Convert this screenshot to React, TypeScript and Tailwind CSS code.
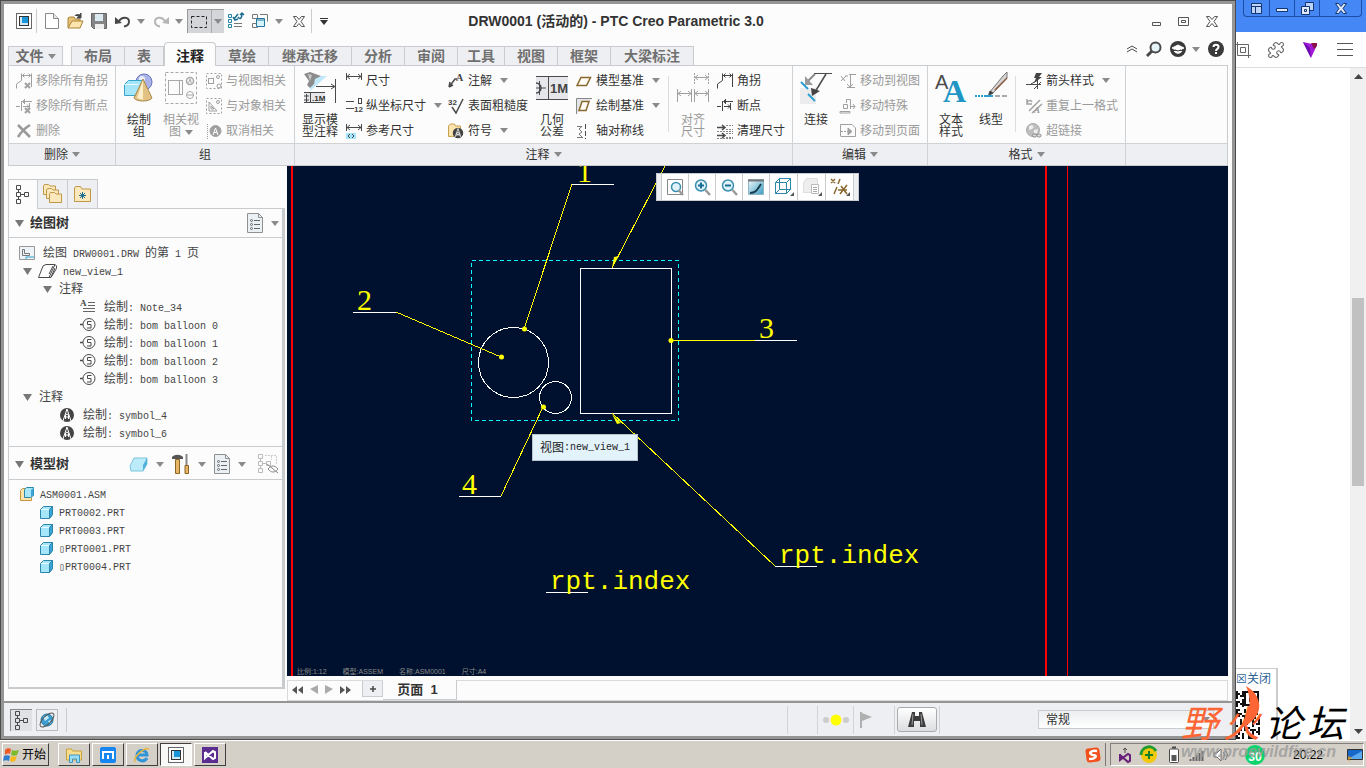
import type { ReactNode } from "react";
import { clsx } from "clsx";
import { Puzzle } from "lucide-react";

type Kids = { children?: ReactNode };

const Svg = ({ w = 16, h = 16, children }: Kids & { w?: number; h?: number }) => (
  <svg width={w} height={h} viewBox={`0 0 ${w} ${h}`} fill="none" stroke="#4a4a4a" className="shrink-0 overflow-visible" aria-hidden="true">
    {children}
  </svg>
);

const Caret = ({ dark = false }: { dark?: boolean }) => (
  <svg width="8" height="5" className="shrink-0" aria-hidden="true">
    <path d="M0 0h8L4 5z" fill={dark ? "#333" : "#8a8a8a"} />
  </svg>
);

// Latin runs sit next to 12px Chinese text with 6px wide cells
const Mono = ({ children }: Kids) => (
  <span className="font-['Liberation_Mono','Noto_Sans_CJK_SC',monospace] text-[10px] whitespace-pre">{children}</span>
);

/* ---------- icons ---------- */

const CornerIcon = ({ off = false }: { off?: boolean }) => (
  <Svg>
    <g stroke={off ? "#a0a0a0" : "#444"}>
      <path d="M.5 15.500V11L5.500 7.500V.5M15.500 .5V14M6 2.500H15" />
      <path d="M8.500.5L6.500 2.500L8.500 4.500M12.500.5L14.500 2.500L12.500 4.500" />
      {off && <path d="M9 10l5 5M14 10l-5 5" strokeWidth="2" />}
    </g>
  </Svg>
);

const BreakIcon = ({ off = false }: { off?: boolean }) => (
  <Svg>
    <g stroke={off ? "#a0a0a0" : "#444"}>
      <path d="M0 8.500H4M5.500 3V13M8.500 1V6M7 3.500H16M7 8.500H13M13.500 5V12" />
      <path d="M9 1L6.500 3.500L9 6M11 6.500l2 2-2 2" />
      {off && <path d="M9 10l5 5M14 10l-5 5" strokeWidth="2" />}
    </g>
  </Svg>
);

const DeleteIcon = () => (
  <Svg>
    <path d="M2 2l12 12M14 2C9 5 5 9 2 14" stroke="#999" strokeWidth="2.500" />
  </Svg>
);

const ShapesIcon = () => (
  <Svg w={32} h={32}>
    <circle cx="21" cy="10" r="8" fill="#aab4ea" stroke="#6674b8" />
    <circle cx="19" cy="7" r="3" fill="#e9ecfd" stroke="none" />
    <path d="M1.500 12.500l4-4h14v11l-3 4h-15z" fill="#a5e6fb" stroke="#38a5cb" />
    <path d="M1.500 12.500h14" stroke="#e8faff" />
    <path d="M20 7l-9 19c2 4 16 4 18 0z" fill="#e3c283" stroke="#a88a4a" />
    <path d="M20 8l-6 18 6 2z" fill="#fbeecb" stroke="none" />
  </Svg>
);

const RelatedViewIcon = () => (
  <Svg w={32} h={32}>
    <g stroke="#a8a8a8">
      <rect x=".5" y=".5" width="31" height="31" strokeDasharray="3 2" />
      <rect x="3.500" y="8.500" width="14" height="14" />
      <path d="M14.500 9v13" />
      <circle cx="25" cy="9" r="3.500" strokeWidth="1.500" />
      <circle cx="25" cy="23" r="3.500" />
      <path d="M21 23h8M23.500 11l1.500-4 1.500 4" />
    </g>
  </Svg>
);

const RelateIcon = ({ kind }: { kind: "view" | "object" | "cancel" }) => (
  <Svg>
    <g stroke="#a0a0a0">
      {kind === "cancel" ? (
        <>
          <path d="M1.500 1v15" strokeDasharray="1 1" />
          <circle cx="9.500" cy="8" r="5.500" fill="#a0a0a0" />
          <path d="M7 12l2.500-7 2.500 7M8 9.500h3" stroke="#fff" />
        </>
      ) : (
        <>
          <rect x=".5" y=".5" width="15" height="15" strokeDasharray="2 2" />
          {kind === "view" ? <rect x="2.500" y="5.500" width="5" height="5" /> : <path d="M3 13V4l8 9zM5 11V8l3 3z" />}
          <circle cx="12" cy="4" r="1.500" />
          {kind === "view" && <circle cx="13" cy="13" r="2" />}
        </>
      )}
    </g>
  </Svg>
);

const ShowNotesIcon = () => (
  <Svg w={32} h={32}>
    <path d="M7 10L14 4h9L6 19z" fill="#bfe9fa" stroke="none" />
    <path d="M0 2l6-2 11 4-6 3-1 5-4 4-3-3 2-4z" fill="#8b8b8b" stroke="none" />
    <path d="M4 2l4 1-2 6z" fill="#c9c9c9" stroke="none" />
    <path d="M12 14.500H30M31.500 7v24M27 12l4 2.500-4 2.500" />
    <rect x="0" y="20" width="21" height="11" fill="#e6e7ea" stroke="none" />
    <path d="M0 20.500h21M0 30.500h21M6.500 20v11M2.500 22v8M0 24h5M0 28h5" />
    <text x="8" y="29" fontSize="8" fontWeight="bold" fontFamily="Liberation Sans, sans-serif" fill="#333" stroke="none">.1M</text>
  </Svg>
);

const DimIcon = ({ reference = false }: { reference?: boolean }) => (
  <Svg>
    <g transform={reference ? undefined : "translate(0 -1)"}>
      <path d="M.5 1v7M15.500 1v7M1 4.500h14M4 2L1 4.500 4 7M12 2l3 2.500L12 7" />
      {reference && <rect x="0" y="10" width="10" height="6" fill="#a5e6fb" stroke="none" />}
      {reference && <path d="M4 11L2 13l2 2M6 11l2 2-2 2" />}
    </g>
  </Svg>
);

const OrdinateIcon = () => (
  <Svg>
    <path d="M0 3.500h8M0 10.500h8" />
    <rect x="12.500" y=".5" width="3" height="5" />
    <text x="8" y="14" fontSize="8" fontWeight="bold" fontFamily="Liberation Sans, sans-serif" fill="#444" stroke="none">12</text>
  </Svg>
);

const NoteIcon = () => (
  <Svg>
    <path d="M1 14L7 6H9M1 14l1-5M1 14l4-2" strokeWidth="1.500" />
    <text x="8" y="8" fontSize="10" fontWeight="bold" fontFamily="Liberation Serif, serif" fill="#444" stroke="none">A</text>
  </Svg>
);

const RoughIcon = () => (
  <Svg>
    <text x="0" y="7" fontSize="8" fontWeight="bold" fontFamily="Liberation Sans, sans-serif" fill="#444" stroke="none">32</text>
    <path d="M4 9l4 6L15 1" strokeWidth="1.500" />
  </Svg>
);

const SymbolMark = ({ folder = false }: { folder?: boolean }) => (
  <Svg>
    {folder && <path d="M.5 13.500V3l2-2h4l1 2h5v10z" fill="#fbe4ae" stroke="#c6a04e" />}
    <g transform={folder ? "translate(4 4) scale(.75)" : undefined}>
      <circle cx="8" cy="8" r="7" fill="#444" stroke="none" />
      <path d="M4 14L8 2l4 12" fill="#444" stroke="#fff" />
      <path d="M6.500 12V8l1.500-1 1.500 1v4M6.500 10h3" stroke="#fff" />
    </g>
  </Svg>
);

const GeomTolIcon = () => (
  <Svg w={32} h={32}>
    <rect x="0" y="5" width="32" height="22" fill="#e6e7ea" stroke="none" />
    <path d="M0 4.500h32M0 27.500h32M12.500 5v22M3.500 9v14M0 16h10" />
    <path d="M0 11a5 5 0 0 1 0 10" strokeWidth="1.500" />
    <text x="14" y="21" fontSize="13" fontWeight="bold" fontFamily="Liberation Sans, sans-serif" fill="#444" stroke="none">1M</text>
  </Svg>
);

const DatumIcon = ({ active = false }: { active?: boolean }) => (
  <Svg>
    {active && <path d="M.5 16V.5H16" fill="#e3e4e6" stroke="#888" />}
    <path d={active ? "M3 12.500L6 3.500h7l-3 9z" : "M1 12.500L5 4.500h9.500l-4 8z"} stroke="#89672e" strokeWidth="1.500" fill="#fffdf5" />
  </Svg>
);

const AxisSymIcon = () => (
  <Svg>
    <path d="M1 3.500h5M6 3.500L3 6l3 3-3 2 3 3M1 14.500h6" stroke="#777" />
    <path d="M9.500 1v15" strokeDasharray="5 2" />
  </Svg>
);

const AlignDimIcon = () => (
  <Svg w={32} h={32}>
    <g stroke="#a0a0a0">
      <path d="M.5 17v13M14.500 17v13M17.500 17v13M31.500 17v13M1 21.500h13M18 21.500h13" />
      <path d="M4 19l-3 2.500L4 24M11 19l3 2.500-3 2.500M21 19l-3 2.500 3 2.500M28 19l3 2.500-3 2.500" />
      <path d="M17.500 1v12M31.500 1v12" strokeDasharray="2 1" />
      <path d="M18 5.500h13M21 3l-3 2.500L21 8M28 3l3 2.500L28 8" />
    </g>
  </Svg>
);

const CleanIcon = () => (
  <Svg>
    <path d="M0 4.500h8M0 12.500h8M5 2l3 2.500L5 7M5 10l3 2.500L5 15" strokeWidth="1.500" />
    <path d="M9 2.500h7M9 6.500h7M9 10.500h7M9 14.500h7M0 8.500h16M0 15.500h16" stroke="#888" strokeDasharray="2 1" />
  </Svg>
);

const ConnectIcon = () => (
  <Svg w={32} h={32}>
    <rect x="0" y="16" width="16" height="16" fill="#ececee" stroke="none" />
    <path d="M14 1.500H32" />
    <path d="M26 2L15 20" strokeWidth="1.500" />
    <path d="M15 2L7 10" stroke="#8c8c8c" strokeWidth="2" />
    <path d="M5 4v9h8z" fill="#999" stroke="none" />
    <path d="M11 16l9 3-8 5z" fill="#444" stroke="none" />
    <path d="M1 10l7 7M8 22l7 7" stroke="#2a9fd0" strokeWidth="2" />
  </Svg>
);

const MoveIcon = ({ kind }: { kind: "view" | "special" | "page" }) => (
  <Svg>
    <g stroke="#a0a0a0">
      {kind === "view" && <path d="M9 1.500h7M10.500 2v11M7 14.500h8M1 3l4 5M1 8l5-5M5 3l3 0M7 11l3 3 3-3" />}
      {kind === "special" && <path d="M6.500 5V1.500h4V11M3.500 6.500h4v4h-4zM0 13.500h10V15H0zM11 8.500h4M13 6l2 2.500-2 2.500" />}
      {kind === "page" && (
        <>
          <path d="M.5 13V1.500H12L15.500 5v8.500H.5" />
          <path d="M1 8.500h8" strokeDasharray="2 1" />
          <path d="M8 5l4 3.500L8 12z" fill="#a0a0a0" />
        </>
      )}
    </g>
  </Svg>
);

const TextStyleIcon = () => (
  <Svg w={32} h={32}>
    <g stroke="none">
      <text x="0" y="17" fontSize="20" fontFamily="Liberation Sans, sans-serif" fill="#4b4b4b">A</text>
      <text x="8" y="30" fontSize="32" fontWeight="bold" fontFamily="Liberation Serif, serif" fill="#2196c4">A</text>
    </g>
  </Svg>
);

const LineTypeIcon = () => (
  <Svg w={32} h={32}>
    <path d="M14 21L28 4l4-4v6L18 21l-4 2z" fill="#d4d4d4" stroke="#777" />
    <path d="M20 18L32 6" stroke="#8c5a3c" strokeWidth="1.500" />
    <path d="M14 23l1-4 3 2z" fill="#333" />
    <path d="M0 24h8" stroke="#2a9fd0" strokeDasharray="2 1" strokeWidth="2" />
    <path d="M9 24h9" stroke="#2a9fd0" strokeWidth="2" />
    <path d="M20 24h12" stroke="#aaa" strokeDasharray="5 2" strokeWidth="2" />
  </Svg>
);

const ArrowStyleIcon = () => (
  <Svg>
    <path d="M0 11.500h15M11.500 6v10M5 11l7-4M15 9l-7 7" />
    <path d="M10 0h6l-3 4h3l-8 6 2-5H8z" fill="#444" stroke="none" />
  </Svg>
);

const RepeatIcon = () => (
  <Svg>
    <path d="M3 13L14 2M6 15L16 6M1 1v5h5M1 5c1-3 4-3 5-1" stroke="#a0a0a0" strokeWidth="1.500" />
    <text x="8" y="15" fontSize="9" fontStyle="italic" fontWeight="bold" fontFamily="Liberation Serif, serif" fill="#999" stroke="none">A</text>
  </Svg>
);

const GlobeLinkIcon = () => (
  <Svg>
    <circle cx="7" cy="7" r="6.500" fill="#bdbdbd" stroke="#aaa" />
    <path d="M3 3l3-1 2 2-2 2-3 1zM8 7l4-1-1 4-3 1z" fill="#eee" stroke="none" />
    <rect x="6.500" y="11" width="4" height="3" rx="1.500" fill="#ddd" stroke="#888" />
    <rect x="11" y="11" width="4" height="3" rx="1.500" fill="#ddd" stroke="#888" />
  </Svg>
);

const TreeIcon = () => (
  <Svg w={14} h={19}>
    <path d="M.5.5h4v4h-4zM.5 7.500h4v4h-4zM.5 14.500h4v4h-4zM8.500 7.500h4v4h-4zM2.500 5v2M2.500 12v2M5 9.500h3" />
  </Svg>
);

const Folder = ({ x = 0, y = 0 }: { x?: number; y?: number }) => (
  <g transform={`translate(${x} ${y})`}>
    <path d="M.5 10.500V2l1-1.500h4L7 2h5.500v8.500z" fill="#fbe8bd" stroke="#bf9848" />
  </g>
);

const ListDocIcon = () => (
  <Svg w={16} h={20}>
    <path d="M.5.5h11l4 4v15H.5z" fill="#eaf1f4" stroke="#909090" />
    <path d="M11.500.5v4h4" stroke="#909090" />
    <path d="M7 7.500h6M7 11.500h6M7 15.500h6" stroke="#666" />
    <circle cx="4.500" cy="7.500" r="1" stroke="#666" />
    <circle cx="4.500" cy="11.500" r="1" stroke="#666" />
    <circle cx="4.500" cy="15.500" r="1" stroke="#666" />
  </Svg>
);

const PartIcon = () => (
  <Svg w={13} h={13}>
    <path d="M.5 3.500l3-3h9v8l-3 4h-9z" fill="#a5e6fb" stroke="#2c86ab" />
    <path d="M9.500 3.500l3-3v8l-3 4z" fill="#3aa5d6" stroke="#2c86ab" />
    <path d="M1 3.500h8" stroke="#e8faff" />
  </Svg>
);

const AsmIcon = () => (
  <Svg w={14} h={15}>
    <path d="M.5 3.500l2-2h3v9h6v3H.5z" fill="#fbe4ae" stroke="#c6943c" />
    <path d="M4.500 2.500l2-2h7v8l-3 2h-6z" fill="#a5e6fb" stroke="#2c86ab" />
    <path d="M11 3l2.500-2v7L11 10z" fill="#3aa5d6" stroke="none" />
  </Svg>
);

const BalloonIcon = () => (
  <Svg>
    <path d="M0 7.500h3" strokeWidth="1.500" />
    <circle cx="9" cy="7.500" r="6" />
    <path d="M11.500 4.500h-4v3h3.500v3.500h-4" />
  </Svg>
);

const AppIcon = () => (
  <Svg>
    <rect x=".5" y=".5" width="15" height="15" fill="#fff" stroke="#666" />
    <rect x="3.500" y="3.500" width="9" height="9" stroke="#333" fill="#cfe9f7" />
    <rect x="6" y="4" width="6" height="6" fill="#1a95da" stroke="none" />
  </Svg>
);

const UndoIcon = ({ redo = false }: { redo?: boolean }) => (
  <Svg>
    <g transform={redo ? "translate(16 0) scale(-1 1)" : undefined} stroke={redo ? "#b5b5b5" : "#484848"}>
      <path d="M4 8C7 3 14 4 14 8.500c0 3-2 4.500-5 5" strokeWidth="2" />
      <path d="M0 4v7l7-1z" fill={redo ? "#b5b5b5" : "#484848"} stroke="none" />
    </g>
  </Svg>
);

const CloseX = () => (
  <Svg w={12} h={11}>
    <path d="M.5.5h3L6 3.500 8.500.5h3L8 5.500l3.500 5h-3L6 7.500l-2.500 3h-3L4 5.500z" stroke="#555" />
  </Svg>
);

/* ---------- ribbon ---------- */

function Small({ icon, text, off, drop }: { icon: ReactNode; text: string; off?: boolean; drop?: boolean }) {
  return (
    <button disabled={off} className={clsx("flex h-[25px] items-center gap-1 text-left whitespace-nowrap", off ? "text-[#9a9a9a]" : "text-[#333]")}>
      {icon}
      <span>{text}</span>
      {drop && <span className="ml-1"><Caret /></span>}
    </button>
  );
}

function Big({ icon, lines, off, drop }: { icon: ReactNode; lines: string[]; off?: boolean; drop?: boolean }) {
  return (
    <button disabled={off} className={clsx("flex w-10 shrink-0 flex-col items-center pt-1", off ? "text-[#9a9a9a]" : "text-[#333]")}>
      {icon}
      <span className="mt-[10px] flex flex-col items-center leading-[12px] whitespace-nowrap">
        {lines.map((line, i) => (
          <span key={line} className="flex items-center gap-1">
            {line}
            {drop && i === lines.length - 1 && <Caret />}
          </span>
        ))}
      </span>
    </button>
  );
}

function Group({ title, drop, className, children }: Kids & { title?: string; drop?: boolean; className: string }) {
  return (
    <section className={clsx("flex flex-col border-r border-[#cfd2d5] last:border-r-0", className)}>
      <div className="flex h-[77px] items-start pt-[2px]">{children}</div>
      <div className="flex h-[22px] items-center justify-center gap-1 border-t border-[#cfd2d5] bg-[#eeeff2] text-[#333]">
        {title}
        {drop && <Caret />}
      </div>
    </section>
  );
}

const Sep = () => <span className="mt-2 h-14 w-px bg-[#dcdcdc]" />;

function Ribbon() {
  return (
    <div className="mx-1 flex h-[101px] shrink-0 border border-[#c8cccf] text-[12px]">
      <Group title="删除" drop className="w-[107px]">
        <div className="pl-[7px]">
          <Small off icon={<CornerIcon off />} text="移除所有角拐" />
          <Small off icon={<BreakIcon off />} text="移除所有断点" />
          <Small off icon={<DeleteIcon />} text="删除" />
        </div>
      </Group>
      <Group title="组" className="w-[179px]">
        <div className="flex pl-[3px]">
          <Big icon={<ShapesIcon />} lines={["绘制", "组"]} />
          <span className="w-[2px]" />
          <Big off drop icon={<RelatedViewIcon />} lines={["相关视", "图"]} />
          <div className="ml-[5px]">
            <Small off icon={<RelateIcon kind="view" />} text="与视图相关" />
            <Small off icon={<RelateIcon kind="object" />} text="与对象相关" />
            <Small off icon={<RelateIcon kind="cancel" />} text="取消相关" />
          </div>
        </div>
      </Group>
      <Group title="注释" drop className="w-[498px]">
        <div className="ml-[5px] flex">
          <Big icon={<ShowNotesIcon />} lines={["显示模", "型注释"]} />
          <div className="ml-[6px]">
            <Small icon={<DimIcon />} text="尺寸" />
            <Small drop icon={<OrdinateIcon />} text="纵坐标尺寸" />
            <Small icon={<DimIcon reference />} text="参考尺寸" />
          </div>
          <div className="ml-[6px]">
            <Small drop icon={<NoteIcon />} text="注解" />
            <Small icon={<RoughIcon />} text="表面粗糙度" />
            <Small drop icon={<SymbolMark folder />} text="符号" />
          </div>
          <span className="w-1" />
          <Big icon={<GeomTolIcon />} lines={["几何", "公差"]} />
          <div className="ml-1">
            <Small drop icon={<DatumIcon />} text="模型基准" />
            <Small drop icon={<DatumIcon active />} text="绘制基准" />
            <Small icon={<AxisSymIcon />} text="轴对称线" />
          </div>
          <span className="w-2" />
          <Sep />
          <span className="w-1" />
          <Big off icon={<AlignDimIcon />} lines={["对齐", "尺寸"]} />
          <div className="ml-1">
            <Small icon={<CornerIcon />} text="角拐" />
            <Small icon={<BreakIcon />} text="断点" />
            <Small icon={<CleanIcon />} text="清理尺寸" />
          </div>
        </div>
      </Group>
      <Group title="编辑" drop className="w-[135px]">
        <div className="ml-[3px] flex">
          <Big icon={<ConnectIcon />} lines={["连接"]} />
          <div className="ml-1">
            <Small off icon={<MoveIcon kind="view" />} text="移动到视图" />
            <Small off icon={<MoveIcon kind="special" />} text="移动特殊" />
            <Small off icon={<MoveIcon kind="page" />} text="移动到页面" />
          </div>
        </div>
      </Group>
      <Group title="格式" drop className="w-[198px]">
        <div className="ml-[3px] flex">
          <Big icon={<TextStyleIcon />} lines={["文本", "样式"]} />
          <Big icon={<LineTypeIcon />} lines={["线型"]} />
          <span className="w-1" />
          <Sep />
          <div className="ml-[10px]">
            <Small drop icon={<ArrowStyleIcon />} text="箭头样式" />
            <Small off icon={<RepeatIcon />} text="重复上一格式" />
            <Small off icon={<GlobeLinkIcon />} text="超链接" />
          </div>
        </div>
      </Group>
      <Group className="flex-1" />
    </div>
  );
}

/* ---------- title bar and tabs ---------- */

function TitleBar() {
  return (
    <div className="flex h-[34px] shrink-0 items-center px-3">
      <div className="flex flex-1 items-center">
        <AppIcon />
        <span className="mr-2 ml-1 h-6 w-px bg-[#ccc]" />
        <button aria-label="新建">
          <Svg w={14}>
            <path d="M.5.5h8l5 5v10H.5z" fill="#fff" stroke="#888" />
            <path d="M8.500.5v5h5" stroke="#888" fill="#dfe9ee" />
          </Svg>
        </button>
        <button aria-label="打开" className="ml-2">
          <Svg>
            <path d="M1 14.500V5l2-1h4l1 2h5v3" fill="#e6c47a" stroke="#ab8237" />
            <path d="M1 15l4-7h11l-3 7z" fill="#fbe4ae" stroke="#ab8237" />
            <path d="M8 3c1-2 4-2 5 0M14 0v5h-4z" fill="#444" />
          </Svg>
        </button>
        <button aria-label="保存" className="ml-2">
          <Svg>
            <path d="M.5.5h15v15H2.500l-2-2z" fill="#858585" stroke="#666" />
            <rect x="4" y="1" width="8" height="7" fill="#dcebf2" stroke="none" />
            <rect x="4" y="11" width="9" height="5" fill="#eee" stroke="none" />
          </Svg>
        </button>
        <button aria-label="撤消" className="ml-2 flex items-center gap-[6px]"><UndoIcon /><Caret /></button>
        <button aria-label="重做" className="ml-2 flex items-center gap-[6px]"><UndoIcon redo /><Caret /></button>
        <button aria-label="选择" className="ml-1 flex h-6 items-center border-t border-l border-[#999] bg-[#d3d5d8] pl-[3px]">
          <Svg w={17} h={12}>
            <rect x=".5" y=".5" width="15" height="11" stroke="#222" strokeDasharray="3 2" />
          </Svg>
          <span className="ml-[3px] flex h-full items-center border-l border-[#aaa] px-[2px]"><Caret /></span>
        </button>
        <button aria-label="重新生成" className="ml-1">
          <Svg>
            <path d="M.5 1.500h3v3h-3zM.5 6.500h3v3h-3zM.5 11.500h3v3h-3z" stroke="#2385ac" />
            <path d="M6 10.500h8M6 13.500h8" stroke="#777" />
            <path d="M6 6l4-5M5 4l2 3 3-1M10 4c2 3 4 1 4-3M12 2l2-2 2 2" stroke="#1b6d92" strokeWidth="1.500" />
          </Svg>
        </button>
        <button aria-label="窗口" className="ml-2 flex items-center gap-[7px]">
          <Svg>
            <path d="M.5 1.500h5v4h-5zM.5 10.500h5v4h-5zM8 1.500h7.500v7" stroke="#777" />
            <path d="M4.500 5.500h8v8h-8z" fill="#d6f2fb" stroke="#26799c" />
            <path d="M5 7h8" stroke="#26799c" />
          </Svg>
          <Caret />
        </button>
        <button aria-label="关闭" className="ml-[10px]"><CloseX /></button>
        <span className="ml-[6px] h-6 w-px bg-[#ccc]" />
        <button aria-label="自定义" className="ml-2 flex flex-col gap-px">
          <span className="h-px w-2 bg-[#333]" />
          <Caret dark />
        </button>
      </div>
      <h1 className="text-[14px] font-bold text-[#333]">DRW0001 (活动的) - PTC Creo Parametric 3.0</h1>
      <div className="-mr-[2px] ml-[2px] flex flex-1 items-center justify-end gap-4 pr-1">
        <button aria-label="最小化"><Svg w={10} h={9}><path d="M.5 5.500h8v3h-8z" stroke="#555" /></Svg></button>
        <button aria-label="最大化"><Svg w={12} h={9}><path d="M.5.5h10v8h-10zM3.500 3.500h4v2h-4z" stroke="#555" /></Svg></button>
        <button aria-label="关闭窗口"><CloseX /></button>
      </div>
    </div>
  );
}

const tabs = ["布局", "表", "注释", "草绘", "继承迁移", "分析", "审阅", "工具", "视图", "框架", "大梁标注"];

function TabRow() {
  return (
    <div className="-mb-px flex h-7 shrink-0 items-end px-1 text-[14px] font-bold">
      <button className="mr-2 flex h-5 w-[55px] items-center justify-center gap-1 border border-b-0 border-[#c8cccf] bg-[#eeeff2] text-[#6b6b6b]">
        文件 <Caret />
      </button>
      <nav className="flex items-end" role="tablist">
        {tabs.map((tab, i) => (
          <button
            key={tab}
            role="tab"
            aria-selected={tab === "注释"}
            className={clsx(
              "border-[#c8cccf] whitespace-nowrap",
              tab === "工具" ? "px-[9px]" : tab.length === 4 ? "px-[13px]" : tab === "注释" ? "px-[11px]" : "px-3",
              tab === "注释"
                ? "z-10 h-6 rounded-t-sm border border-b-0 bg-[#fcfcfc] pt-[2px] leading-[20px] text-[#222]"
                : "h-5 border-t border-r bg-[#eeeff2] leading-[19px] text-[#707070]",
              i === 0 && "border-l",
            )}
          >
            {tab}
          </button>
        ))}
      </nav>
      <div className="ml-auto flex h-7 items-center pt-1 pr-1 pb-[10px]">
        <button aria-label="折叠功能区" className="mr-2">
          <Svg w={12} h={8}><path d="M1 4l5-3 5 3M1 7l5-3 5 3" /></Svg>
        </button>
        <button aria-label="搜索" className="mr-2">
          <Svg>
            <circle cx="9.500" cy="6.500" r="5" strokeWidth="2" fill="#e6f4fa" />
            <path d="M6 10l-5 5" strokeWidth="3" />
          </Svg>
        </button>
        <button aria-label="学习" className="mr-2 flex items-center gap-[6px]">
          <Svg>
            <circle cx="8" cy="8" r="8" fill="#3a3a3a" stroke="none" />
            <path d="M2 7l6-3 6 3-6 3zM4 10c2 3 6 3 8 0" stroke="#fff" fill="#fff" />
            <path d="M5 9l3 1 3-1" stroke="#3a3a3a" />
          </Svg>
          <Caret />
        </button>
        <button aria-label="帮助">
          <Svg>
            <circle cx="8" cy="8" r="8" fill="#3a3a3a" stroke="none" />
            <path d="M5.500 6c0-3 5-3 5 0 0 2-2.500 2-2.500 4M8 11v2" stroke="#fff" strokeWidth="2" />
          </Svg>
        </button>
      </div>
    </div>
  );
}

/* ---------- left panel ---------- */

const Twist = () => (
  <svg width="9" height="7" className="shrink-0" aria-hidden="true">
    <path d="M0 0h9L4.500 7z" fill="#777" />
  </svg>
);

function Row({ icon, pad, twist, children }: Kids & { icon?: ReactNode; pad: string; twist?: boolean }) {
  return (
    <li className={clsx("flex h-[18px] items-center whitespace-nowrap", pad)}>
      {twist && <span className="mr-[7px]"><Twist /></span>}
      {icon && <span className="mr-2 flex shrink-0">{icon}</span>}
      <span>{children}</span>
    </li>
  );
}

function TreePanel() {
  return (
    <aside className="flex w-[283px] shrink-0 flex-col pt-[13px] pr-[2px] pb-3 pl-1 text-[12px] text-[#444]">
      <div className="-mb-px flex h-[30px]">
        <button aria-label="模型树" className="z-10 flex w-[30px] items-center justify-center border border-b-0 border-[#c8cccf] bg-[#fcfcfc]"><TreeIcon /></button>
        <button aria-label="文件夹" className="flex w-[30px] items-center justify-center border-t border-r border-b border-[#c8cccf] bg-[#eeeff2]">
          <Svg w={20} h={20}><Folder /><Folder x={3} y={4} /><Folder x={6} y={8} /></Svg>
        </button>
        <button aria-label="收藏夹" className="flex w-[30px] items-center justify-center border-t border-r border-b border-[#c8cccf] bg-[#eeeff2]">
          <Svg w={17}>
            <path d="M.5 15.500V2l1-1.500h5L8 3h8.500v12.500z" fill="#fbe8bd" stroke="#bf9848" />
            <path d="M8.500 6v7M5 9.500h7M6 7l5 5M11 7l-5 5" stroke="#1b6d92" />
          </Svg>
        </button>
      </div>
      <div className="flex flex-1 flex-col border border-r-[3px] border-b-2 border-[#c8cccf] bg-[#fcfcfc]">
        <div className="flex h-[29px] items-center border-b border-[#c8cccf] px-[6px]">
          <Twist />
          <h2 className="ml-[6px] flex-1 text-[13px] font-bold text-[#333]">绘图树</h2>
          <button aria-label="树设置" className="-mr-[3px] flex items-center gap-2"><ListDocIcon /><Caret /></button>
        </div>
        <ul className="border-b border-[#c8cccf] pt-[6px] pb-1">
          <Row pad="pl-[10px]" icon={<Svg h={14}><path d="M.5.5h15v13H.5z" fill="#edf3f6" stroke="#999" /><path d="M3.500 3.500h2v4h5v2h-7z" stroke="#777" /><path d="M7 13v-2h8" stroke="#2a9fd0" /></Svg>}>
            绘图<Mono> DRW0001.DRW </Mono>的第<Mono> 1 </Mono>页
          </Row>
          <Row pad="pl-[14px] [&>span]:mr-[6px]" twist icon={<Svg w={19} h={15}><path d="M.5 13.500L5 2l3-1.500h9L11 13.500zM11 13.500h2l5.500-9V2L17 .5M11 10l4-8M13 13l4-9" /></Svg>}>
            <Mono>new_view_1</Mono>
          </Row>
          <Row pad="pl-[34px]" twist>注释</Row>
          <Row pad="pl-[71px]" icon={<Svg><text x="0" y="7" fontSize="9" fontWeight="bold" fontFamily="Liberation Serif, serif" fill="#444" stroke="none">A</text><path d="M8 3.500h7M8 6.500h7M3 9.500h12M3 12.500h12" stroke="#666" /></Svg>}>
            绘制<Mono>: Note_34</Mono>
          </Row>
          {[0, 1, 2, 3].map((n) => (
            <Row key={n} pad="pl-[71px]" icon={<BalloonIcon />}>
              绘制<Mono>{`: bom balloon ${n}`}</Mono>
            </Row>
          ))}
          <Row pad="pl-[14px]" twist>注释</Row>
          {[4, 6].map((n) => (
            <Row key={n} pad="pl-[50px]" icon={<SymbolMark />}>
              绘制<Mono>{`: symbol_${n}`}</Mono>
            </Row>
          ))}
        </ul>
        <div className="flex h-[33px] items-center border-b border-[#c8cccf] px-[6px] pt-[2px]">
          <Twist />
          <h2 className="ml-[6px] flex-1 text-[13px] font-bold text-[#333]">模型树</h2>
          <div className="-mr-[2px] flex items-center gap-2">
            <button aria-label="显示" className="flex items-center gap-2">
              <Svg w={19}><path d="M1 10l4-8h13v6l-4 7H2z" fill="#bcebfa" stroke="#7cc3dc" /><path d="M14 9l4-7v6l-4 7z" fill="#4fb2da" stroke="none" /></Svg>
              <Caret />
            </button>
            <button aria-label="设置" className="flex items-center gap-2">
              <Svg w={18} h={20}><path d="M0 3c3-3 8-3 11 0v2H0z" fill="#555" stroke="none" /><path d="M3.500 5.500h4v14h-4z" fill="#e6b566" stroke="#8c6425" /><path d="M14.500 0v11" strokeWidth="2" stroke="#888" /><path d="M13 11.500h3.500v8H13z" fill="#e6b566" stroke="#8c6425" /></Svg>
              <Caret />
            </button>
            <button aria-label="列" className="flex items-center gap-2"><ListDocIcon /><Caret /></button>
            <button disabled aria-label="隐藏" className="ml-1">
              <Svg w={20} h={20}>
                <path d="M.5.5h4v4h-4zM.5 7.500h4v4h-4zM.5 14.500h4v4h-4zM8.500 7.500h4v4h-4zM2.500 5v2M2.500 12v2M5 9.500h3" stroke="#bbb" />
                <path d="M7 1.500h12M13.500 2v4M18.500 2v9" stroke="#ccc" strokeDasharray="2 1" />
                <path d="M10 15c3-4 7-4 10 0-3 4-7 4-10 0M9 10l11 9" stroke="#888" />
              </Svg>
            </button>
          </div>
        </div>
        <ul className="pt-[5px]">
          <Row pad="pl-[11px] [&>span]:mr-[6px]" icon={<AsmIcon />}><Mono>ASM0001.ASM</Mono></Row>
          {["PRT0002.PRT", "PRT0003.PRT", "▯PRT0001.PRT", "▯PRT0004.PRT"].map((name) => (
            <Row key={name} pad="pl-[31px] [&>span]:mr-[6px]" icon={<PartIcon />}><Mono>{name}</Mono></Row>
          ))}
        </ul>
      </div>
    </aside>
  );
}

/* ---------- drawing ---------- */

const viewTools = [
  <path key="fit" d="M15 15.500H.5V.5h15V14" stroke="#888" />,
  <path key="in" d="M4 6.500h6M7 3.500v6" stroke="#1b6d92" strokeWidth="2" />,
  <path key="out" d="M4 6.500h6" stroke="#1b6d92" strokeWidth="2" />,
];

function ViewToolbar() {
  return (
    <div role="toolbar" className="absolute top-[7px] left-[369px] flex h-7 border border-[#c8cccf] bg-[#eeeff2] px-1">
      {viewTools.map((shape, i) => (
        <button key={i} aria-label={["重新调整", "放大", "缩小"][i]} className="flex w-[27px] items-center justify-center border-l border-[#c8cccf] bg-white">
          <Svg w={17} h={17}>
            {i === 0 && shape}
            <circle cx={i ? 7 : 9} cy={i ? 6.5 : 8} r={i ? 5.5 : 4.5} fill="#e0f3fa" stroke="#3a8fb0" strokeWidth="1.500" />
            {i > 0 && shape}
            <path d="M11.500 11l4.500 5" stroke="#999" strokeWidth="2.500" />
          </Svg>
        </button>
      ))}
      <button aria-label="重画" className="flex w-[27px] items-center justify-center border-l border-[#c8cccf] bg-white">
        <Svg>
          <defs>
            <linearGradient id="repaint" x1="0" y1="0" x2="1" y2="1">
              <stop offset="0" stopColor="#f4fbfd" />
              <stop offset="1" stopColor="#3a9cc2" />
            </linearGradient>
          </defs>
          <path d="M.5.5h15v15H.5z" fill="url(#repaint)" stroke="#8fb4c4" />
          <path d="M0 1.500h16" stroke="#777" strokeWidth="2" />
          <path d="M2 14c6 0 7-3 11-9" stroke="#183c4c" strokeWidth="2" />
        </Svg>
      </button>
      <button aria-label="显示样式" className="flex w-7 items-center justify-center border-l border-[#c8cccf] bg-white">
        <Svg w={20} h={18}><path d="M1.500 4.500h11v11h-11zM5.500.5h11v11h-11zM1.500 4.500l4-4M12.500 4.500l4-4M12.500 15.500l4-4M1.500 15.500l4-4" stroke="#2a86a8" /><path d="M20 14v4h-4z" fill="#555" stroke="none" /></Svg>
      </button>
      <button disabled aria-label="视图管理" className="flex w-7 items-center justify-center border-l border-[#c8cccf] bg-white">
        <Svg w={20} h={18}><path d="M1.500 4.500l3-4h11v11l-3 3h-11z" fill="#eee" stroke="#ddd" /><path d="M9.500 6.500h7v9h-7z" fill="#fff" stroke="#bbb" /><path d="M11 9.500h4M11 11.500h4M11 13.500h4" stroke="#aaa" /><path d="M20 14v4h-4z" fill="#555" stroke="none" /></Svg>
      </button>
      <button aria-label="基准显示" className="flex w-[29px] items-center justify-center border-x border-[#c8cccf] bg-white">
        <Svg w={20} h={18}><path d="M1 1l4 4M5 1L1 5M10 1l-2 5M7 9l-3 7M11 8l6 8M17 7l-7 9M8 12h9" stroke="#89672e" strokeWidth="1.500" /><path d="M20 14v4h-4z" fill="#555" stroke="none" /></Svg>
      </button>
    </div>
  );
}

function Drawing() {
  return (
    <div className="relative min-h-0 flex-1 overflow-hidden bg-[#00112f]">
      <svg className="block h-full w-full" fill="none" shapeRendering="crispEdges">
        {/* sheet border */}
        <g fill="#f00">
          <rect x="4" y="0" width="2" height="100%" />
          <rect x="758" y="0" width="2" height="100%" />
          <rect x="780" y="0" width="1" height="100%" />
        </g>
        <rect x="184.500" y="94.500" width="207" height="160" stroke="#0ff" strokeDasharray="4 3" />
        <g stroke="#fff">
          <rect x="293.500" y="102.500" width="91" height="145" />
          <circle cx="226.500" cy="196.500" r="35" />
          <circle cx="268.500" cy="231.500" r="16" />
          <path d="M285 18.500h42M66 146.500h43M468 174.500h42M172 330.500h42M488 400.500h42M259 426.500h42" />
        </g>
        <g stroke="#ff0">
          <path d="M285 18L237 163M109 146l105 45M384 174.500h84M214 330l42-89M325 102L378 0M325 247l163 153" />
        </g>
        <g fill="#ff0" shapeRendering="auto">
          <circle cx="237.500" cy="163" r="2.500" />
          <circle cx="214.500" cy="191" r="2.500" />
          <circle cx="384" cy="174.500" r="2.500" />
          <circle cx="256.500" cy="241" r="2.500" />
          <path d="M325 102l7-12-5 1zM325 248l9 9-4 1z" />
        </g>
        <g fill="#ff0" fontFamily="Liberation Serif, serif" fontSize="30">
          <text x="290" y="16">1</text>
          <text x="70" y="144">2</text>
          <text x="472" y="172">3</text>
          <text x="175" y="328">4</text>
        </g>
        <g fill="#ff0" fontFamily="Liberation Mono, monospace" fontSize="26">
          <text x="492" y="397">rpt.index</text>
          <text x="263" y="423">rpt.index</text>
        </g>
      </svg>
      <ViewToolbar />
      <div role="tooltip" className="absolute top-[268px] left-[245px] flex h-[27px] items-center border border-[#b9c4cc] bg-[#e2f3fc] px-[7px] text-[12px] whitespace-nowrap text-[#222]">
        视图<Mono>:new_view_1</Mono>
      </div>
      <p className="absolute bottom-0 left-[10px] flex gap-4 text-[7px] leading-[9px] whitespace-nowrap text-[#8a8a86]">
        <span>比例:1:12</span>
        <span>模型:ASSEM</span>
        <span>名称:ASM0001</span>
        <span>尺寸:A4</span>
      </p>
    </div>
  );
}

function SheetBar() {
  return (
    <div className="mt-1 flex h-[21px] shrink-0 border border-[#d8dadc] bg-[#fcfcfc]">
      <div className="flex h-[17px] w-[74px] items-center gap-[7px] pl-1">
        <button aria-label="第一页"><Svg w={11} h={8}><path d="M5 0v8L0 4zM11 0v8L6 4z" fill="#555" stroke="none" /></Svg></button>
        <button aria-label="上一页"><Svg w={8} h={9}><path d="M8 0v9L0 4z" fill="#aaa" stroke="none" /></Svg></button>
        <button aria-label="下一页"><Svg w={8} h={9}><path d="M0 0v9l8-5z" fill="#aaa" stroke="none" /></Svg></button>
        <button aria-label="最后一页"><Svg w={11} h={8}><path d="M0 0v8l5-4zM6 0v8l5-4z" fill="#555" stroke="none" /></Svg></button>
      </div>
      <button aria-label="新页面" className="flex h-4 w-[21px] items-center justify-center border border-t-0 border-[#c8cccf] bg-[#eeeff2]">
        <Svg w={8} h={8}><path d="M4 1v6M1 4h6" strokeWidth="1.500" /></Svg>
      </button>
      <button className="-mt-px h-5 w-[74px] border-r border-b border-[#c8cccf] bg-[#fcfcfc] pr-1 text-[13px] leading-[16px] font-bold whitespace-pre text-[#333]">
        {"页面  1"}
      </button>
    </div>
  );
}

function StatusBar() {
  return (
    <footer className="flex h-[35px] shrink-0 items-center border-t-2 border-[#959595] bg-[#eeeff2] px-[6px]">
      <button aria-label="模型树显示" className="mr-1 flex size-[22px] items-center justify-center border-t border-l border-[#888] bg-[#e0e1e4]"><TreeIcon /></button>
      <button aria-label="浏览器" className="flex size-[22px] items-center justify-center border border-[#bbb]">
        <Svg>
          <circle cx="8" cy="8" r="6" fill="#3d9cd0" stroke="#2a79a5" />
          <path d="M4 5l4-2 2 3-4 3zM9 9l4-1-2 4z" fill="#c5ecfa" stroke="none" />
          <ellipse cx="8" cy="8" rx="9" ry="4" transform="rotate(-45 8 8)" stroke="#555" />
        </Svg>
      </button>
      <span className="ml-2 h-6 w-px bg-[#ccc]" />
      <div className="ml-auto flex h-7 items-center">
        <span className="h-full w-[30px] border-l border-[#d3d3d3]" />
        <span className="flex h-full w-9 items-center justify-center border-l border-[#d3d3d3]">
          <Svg w={26} h={12}>
            <g stroke="none"><circle cx="3" cy="6" r="3" fill="#ccc" /><circle cx="13" cy="6" r="5.500" fill="#ff0" /><circle cx="23" cy="6" r="3" fill="#ccc" /></g>
          </Svg>
        </span>
        <span className="flex h-full w-[41px] items-center border-l border-[#d3d3d3] pl-[6px]">
          <Svg w={12}><path d="M0 0h2v16H0zM2 1l10 4-10 4z" fill="#b0b0b0" stroke="none" /></Svg>
        </span>
        <span className="flex h-full w-[46px] items-center border-x border-[#d3d3d3] pl-[2px]">
          <button aria-label="查找" className="flex h-[25px] w-10 items-center justify-center rounded-[3px] border border-[#aaa] bg-gradient-to-b from-white to-[#dcdde0]">
            <Svg w={18} h={17}><path d="M4 1h3v4h4V1h3l4 15h-6v-6H6v6H0z" fill="#3c3c3c" stroke="none" /><path d="M5 3L4 14M13 3l1 11" stroke="#999" /></Svg>
          </button>
        </span>
      </div>
      <label className="relative ml-[98px]">
        <span className="sr-only">过滤器</span>
        <select className="block h-[19px] w-[176px] appearance-none border border-[#c8cccf] bg-gradient-to-b from-[#eceef0] to-white px-[7px] text-[12px] leading-[16px] text-[#333]">
          <option>常规</option>
        </select>
        <span className="pointer-events-none absolute top-[7px] right-1"><Caret /></span>
      </label>
      <span className="w-3" />
    </footer>
  );
}

/* ---------- browser behind, taskbar, watermark ---------- */

// deterministic module pattern for the visible strip of the code
const qrCells = Array.from({ length: 12 * 24 }, (_, i) => ({ x: i % 12, y: Math.floor(i / 12), on: (i * i * 7 + i * 13 + (i >> 3) * 5) % 11 < 5 })).filter(
  (c) => c.on && !(c.x > 3 && c.y < 9),
);

function Browser() {
  return (
    <div className="relative flex w-[130px] shrink-0 flex-col bg-white">
      <div className="h-8 bg-[#4587f4] pl-[7px]">
        <div className="flex h-[17px] w-[119px] items-center rounded-b border border-t-0 border-[#1c4ea8] text-white">
          <button aria-label="菜单" className="flex h-full w-[26px] items-center justify-center border-r border-[#1c4ea8]"><Svg w={11} h={11}><path d="M.5.5h10v10H.5zM1 3.500h9M4.500 4v6" fill="#bcd3fa" stroke="#14356e" /></Svg></button>
          <button aria-label="浏览器最小化" className="flex h-full w-[25px] items-center justify-center border-r border-[#1c4ea8]"><Svg w={12} h={10}><path d="M.5 5.500h11v3H.5z" fill="#dfeafd" stroke="#14356e" /></Svg></button>
          <button aria-label="浏览器还原" className="flex h-full w-[25px] items-center justify-center border-r border-[#1c4ea8]"><Svg w={13} h={13}><path d="M4.500.5h8v8h-8z" fill="#bcd3fa" stroke="#14356e" /><path d="M.5 4.500h8v8h-8zM3.500 7.500h2v2h-2z" fill="#dfeafd" stroke="#14356e" /></Svg></button>
          <button aria-label="浏览器关闭" className="flex flex-1 justify-center"><Svg w={12} h={11}><path d="M.5.5h3L6 3.500 8.500.5h3L8 5.500l3.500 5h-3L6 7.500l-2.500 3h-3L4 5.500z" stroke="#14356e" fill="#dfeafd" /></Svg></button>
        </div>
      </div>
      <div className="flex h-9 items-center border-b border-[#ddd] pr-[13px]">
        <Svg w={15}><path d="M0 2.500h12.500V16M1.500 0v13.500H15M4.500 5.500h5v5h-5z" stroke="#666" /></Svg>
        <span className="ml-4 flex"><Puzzle size={18} color="#666" strokeWidth={1.5} /></span>
        <span className="ml-[18px] flex"><Svg><path d="M0 0l8 16L14 3z" fill="#a21ad6" stroke="none" /><path d="M0 0l8 16-1-10z" fill="#6b0bb0" stroke="none" /><path d="M8 1h6v3l-3 3z" fill="#8b1248" stroke="none" /></Svg></span>
        <button aria-label="浏览器菜单" className="ml-auto"><Svg w={16} h={13}><path d="M0 .5h16M0 6.500h16M0 12.500h16" stroke="#555" /></Svg></button>
      </div>
      <div className="flex flex-1 justify-end">
        <div className="flex w-4 flex-col items-center bg-[#f0f0f0] py-[6px]">
          <Svg w={9} h={5}><path d="M0 5h9L4.500 0z" fill="#444" stroke="none" /></Svg>
          <span className="grow-[218]" />
          <span className="w-3 grow-[188] bg-[#c1c1c1]" />
          <span className="grow-[242]" />
          <Svg w={9} h={5}><path d="M0 0h9L4.500 5z" fill="#444" stroke="none" /></Svg>
        </div>
      </div>
      <div className="absolute bottom-0 left-0 h-[72px] w-[42px] overflow-hidden border-t border-r-2 border-[#ccc] bg-white">
        <a href="#close" className="block pt-[2px] text-[12px] leading-[16px] whitespace-nowrap text-[#2c6397]">☒关闭</a>
        <svg width="24" height="48" className="mt-1" shapeRendering="crispEdges">
          {qrCells.map((c) => <rect key={`${c.x}-${c.y}`} x={c.x * 2} y={c.y * 2} width="2" height="2" fill="#111" />)}
          <path d="M9 1h13v13H9z" fill="none" stroke="#111" strokeWidth="2" />
          <rect x="13" y="5" width="6" height="6" fill="#111" />
        </svg>
      </div>
    </div>
  );
}

function TaskButton({ label, active, children }: Kids & { label: string; active?: boolean }) {
  return (
    <button
      aria-label={label}
      className={clsx(
        "flex h-[23px] w-8 items-center justify-center border",
        active ? "border-t-[#404040] border-r-white border-b-white border-l-[#404040] bg-[#f8f8f6]" : "border-t-white border-r-[#404040] border-b-[#404040] border-l-white bg-[#d4d0c8]",
      )}
    >
      {children}
    </button>
  );
}

function Taskbar() {
  return (
    <div className="flex h-7 shrink-0 items-center border-t border-white bg-[#d4d0c8] pl-[2px] text-[12px] text-black">
      <button className="mr-[9px] flex h-[23px] w-[47px] items-center border border-t-white border-r-[#404040] border-b-[#404040] border-l-white pl-px font-normal whitespace-nowrap">
        <Svg>
          <g stroke="none"><path d="M1 3c2-2 4-2 6-1L6 7c-2-1-4 0-5 1z" fill="#ee5a26" /><path d="M8 3c2 1 4 1 7 0l-2 5c-2 1-4 1-6 0z" fill="#7db92c" /><path d="M0 9c2-1 4-1 6 0l-1 5c-2-1-4-1-6 0z" fill="#2f7fd0" /><path d="M7 9c2 1 4 1 6 0l-2 5c-2 1-4 1-5 0z" fill="#fbb716" /></g>
        </Svg>
        <span className="ml-[2px]">开始</span>
      </button>
      <div className="flex gap-[2px]">
        <TaskButton label="资源管理器"><Svg w={17}><path d="M.5 13V2h5l1 2h9v9z" fill="#f7dd8a" stroke="#c9a23f" /><path d="M3.500 15.500V8h10v7.500h-3V12h-4v3.500z" fill="#9bdcf5" stroke="#4295bd" /></Svg></TaskButton>
        <TaskButton label="傲游"><Svg><rect width="16" height="16" rx="2" fill="#1687f0" stroke="none" /><path d="M3 12V5h10v7M8 8v4" stroke="#fff" strokeWidth="2" /></Svg></TaskButton>
        <TaskButton label="浏览器"><Svg><path d="M13 11c-3 5-10 3-10-3s10-6 10 0H4" stroke="#2f94d8" strokeWidth="3" /><path d="M1 15C-1 10 10 0 15 2" stroke="#e8b43a" strokeWidth="1.500" /></Svg></TaskButton>
        <TaskButton label="Creo" active><AppIcon /></TaskButton>
        <TaskButton label="Visual Studio"><Svg><rect width="16" height="16" fill="#5c2d91" stroke="none" /><path d="M3 5v6l8-7 2 1v6l-2 1-8-7" stroke="#fff" strokeWidth="2" /></Svg></TaskButton>
      </div>
      <div className="ml-auto flex items-center">
        <Svg><rect x="1" y="1" width="14" height="14" rx="3" fill="#f4501e" stroke="none" transform="rotate(-8 8 8)" /><path d="M12 4c-7-1-9 3-4 4 5 0 3 4-4 4" stroke="#fff" strokeWidth="2.500" /></Svg>
        <span className="mx-1 h-[23px] w-px bg-[#777]" />
        <div className="mr-[2px] flex h-[23px] w-[254px] items-center border border-t-[#808080] border-r-white border-b-white border-l-[#808080] pl-2">
          <Svg w={12}><path d="M1 7v6l8-6 2 1v6l-2 1-8-7" stroke="#68217a" strokeWidth="2" /><path d="M6 6V1M4 3l2-2 2 2" /></Svg>
          <span className="w-[10px]" />
          <Svg><circle cx="8" cy="8" r="8" fill="#f4c80a" stroke="none" /><path d="M0 8a8 8 0 0 1 15-4" stroke="#239a2e" strokeWidth="3" /><path d="M8 4v8M4 8h8" stroke="#178025" strokeWidth="2" /></Svg>
          <span className="w-3" />
          <Svg w={10}><rect x=".5" y="2" width="9" height="13.500" rx="1" fill="#fff" /><path d="M3 .5h4" strokeWidth="2" /><rect x="2.500" y="8" width="5" height="6" fill="#555" stroke="none" /></Svg>
          <span className="w-[10px]" />
          <Svg><path d="M1.500 12v2M4.500 10v4M7.500 8v6M10.500 6v8M13.500 4v10" stroke="#666" strokeWidth="2" /></Svg>
          <span className="w-2" />
          <Svg><path d="M1 6h3l4-4v12l-4-4H1z" fill="#fff" stroke="#666" /><path d="M10 5c2 2 2 4 0 6M12 3c3 3 3 7 0 10" stroke="#666" /></Svg>
          <span className="ml-4 flex size-5 shrink-0 items-center justify-center rounded-full bg-[#0bd56c] pt-1 text-[12px] font-bold text-white">30</span>
          <span className="ml-[28px]">20:22</span>
          <span className="ml-auto"><Svg><path d="M.5 2.500h15v10H.5z" fill="#1767c8" stroke="#333" /><path d="M1 12L15 4v8z" fill="#5aa8ee" stroke="none" /><path d="M1 11h4M2 9v5" stroke="#f0a020" /></Svg></span>
        </div>
      </div>
    </div>
  );
}

function Watermark() {
  return (
    <div className="pointer-events-none absolute right-[22px] bottom-2 z-20">
      <div className="relative flex gap-[5px] text-[37px] leading-[38px] italic">
        <span className="text-[#fd6634]">野</span>
        <span className="text-[#fd6634]">火</span>
        <span className="text-black">论</span>
        <span className="text-black">坛</span>
        <svg width="24" height="42" className="absolute -top-5 left-[58px]" aria-hidden="true">
          <path d="M7 0C25 10 26 32 2 42C10 30 14 16 7 0z" fill="#fd6634" />
        </svg>
      </div>
      <p className="text-[16px] leading-[16px] font-bold whitespace-nowrap text-[#999]/80 italic">www.proewildfire.cn</p>
    </div>
  );
}

export default function App() {
  return (
    <div className="relative flex h-screen flex-col overflow-hidden bg-white font-['Liberation_Sans','Noto_Sans_CJK_SC',sans-serif]">
      <div className="flex min-h-0 flex-1">
        <main className="flex min-w-0 flex-1 border border-[#4d4d4d]">
          <div className="flex min-w-0 flex-1 flex-col border-3 border-[#959595] bg-[#fcfcfc]">
            <TitleBar />
            <TabRow />
            <Ribbon />
            <div className="flex min-h-0 flex-1">
              <TreePanel />
              <div className="mr-1 flex min-w-0 flex-1 flex-col">
                <Drawing />
                <SheetBar />
              </div>
            </div>
            <StatusBar />
          </div>
        </main>
        <Browser />
      </div>
      <Taskbar />
      <Watermark />
    </div>
  );
}
